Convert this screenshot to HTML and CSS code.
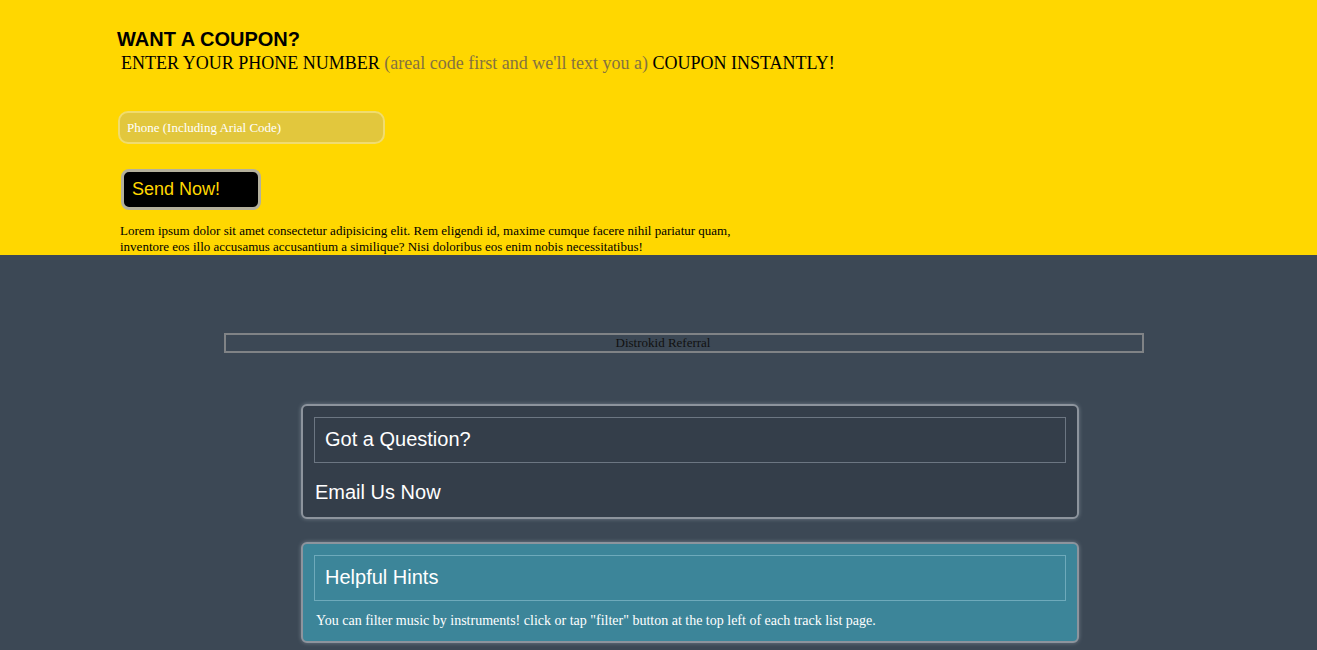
FILE: index.html
```html
<!DOCTYPE html>
<html>
<head>
<meta charset="utf-8">
<link rel="stylesheet" href="styles.css">
</head>
<body>
<section class="coupon">
  <h2 class="coupon-title">WANT A COUPON?</h2>
  <p class="coupon-sub">ENTER YOUR PHONE NUMBER <span class="muted">(areal code first and we'll text you a)</span> COUPON INSTANTLY!</p>
  <form class="coupon-form">
    <input class="phone" type="text" placeholder="Phone (Including Arial Code)">
    <button class="send" type="button">Send Now!</button>
  </form>
  <p class="lorem">Lorem ipsum dolor sit amet consectetur adipisicing elit. Rem eligendi id, maxime cumque facere nihil pariatur quam, inventore eos illo accusamus accusantium a similique? Nisi doloribus eos enim nobis necessitatibus!</p>
</section>
<section class="dark">
  <div class="referral">Distrokid Referral</div>
  <div class="card card-dark">
    <div class="card-head">Got a Question?</div>
    <div class="card-link">Email Us Now</div>
  </div>
  <div class="card card-teal">
    <div class="card-head">Helpful Hints</div>
    <p class="card-text">You can filter music by instruments! click or tap "filter" button at the top left of each track list page.</p>
  </div>
</section>
</body>
</html>
```
FILE: styles.css
```css
html, body {
  margin: 0;
  padding: 0;
  background: #3c4855;
}
body {
  font-family: "Liberation Serif", "Times New Roman", serif;
  width: 1317px;
  height: 650px;
  overflow: hidden;
}
.coupon {
  background: #ffd700;
  height: 255px;
  box-sizing: border-box;
  padding: 28px 0 0 117px;
}
.coupon-title {
  margin: 0;
  font-family: "Liberation Sans", Arial, sans-serif;
  font-weight: bold;
  font-size: 20px;
  line-height: 23px;
  color: #000;
}
.coupon-sub {
  margin: 1px 0 0 4px;
  font-size: 18px;
  line-height: 22px;
  color: #000;
}
.muted {
  color: #857240;
}
.coupon-form {
  display: flex;
  flex-direction: column;
  align-items: flex-start;
  margin-top: 37px;
}
.phone {
  box-sizing: border-box;
  width: 267px;
  height: 33px;
  margin: 0 0 0 1px;
  padding: 0 7px;
  background: #e2c73d;
  border: 2px solid #f0dc6e;
  border-radius: 10px;
  font-family: "Liberation Serif", serif;
  font-size: 13px;
  color: #fff;
  outline: none;
}
.phone::placeholder {
  color: #fff;
}
.send {
  box-sizing: border-box;
  width: 140px;
  height: 41px;
  margin: 25px 0 0 4px;
  padding: 0 0 0 8px;
  text-align: left;
  background: #000;
  border: 3px solid #b4b09c;
  border-radius: 8px;
  font-family: "Liberation Sans", Arial, sans-serif;
  font-size: 18px;
  color: #ffd700;
}
.lorem {
  margin: 13px 0 0 3px;
  width: 625px;
  font-size: 13px;
  line-height: 16px;
  color: #000;
}
.dark {
  padding-top: 78px;
  display: flex;
  flex-direction: column;
  align-items: flex-start;
}
.referral {
  box-sizing: border-box;
  margin-left: 224px;
  width: 920px;
  height: 20px;
  border: 2px solid #808386;
  padding-right: 42px;
  text-align: center;
  font-size: 13px;
  line-height: 16px;
  color: #111;
}
.card {
  box-sizing: border-box;
  margin-left: 301px;
  width: 778px;
  border: 2px solid #8d949d;
  border-radius: 6px;
  box-shadow: 0 0 4px rgba(180, 190, 200, 0.45);
  padding: 11px 11px 0 11px;
}
.card-dark {
  margin-top: 51px;
  height: 115px;
  background: #343e4a;
}
.card-teal {
  margin-top: 23px;
  height: 101px;
  background: #3c8599;
}
.card-head {
  box-sizing: border-box;
  height: 46px;
  border: 1px solid #6c7682;
  padding-left: 10px;
  font-family: "Liberation Sans", Arial, sans-serif;
  font-size: 20px;
  line-height: 42px;
  color: #fff;
}
.card-teal .card-head {
  border-color: #6eaabb;
}
.card-link {
  margin: 18px 0 0 1px;
  font-family: "Liberation Sans", Arial, sans-serif;
  font-size: 20px;
  line-height: 23px;
  color: #fff;
}
.card-text {
  margin: 12px 0 0 2px;
  font-size: 14px;
  line-height: 16px;
  color: #fff;
}
```
